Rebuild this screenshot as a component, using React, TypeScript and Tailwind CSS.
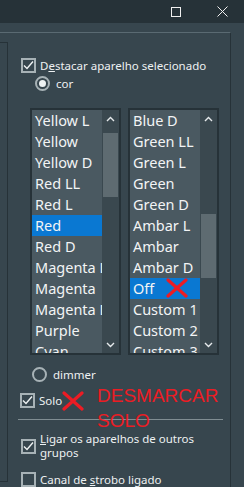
const LEFT = [
  "Yellow L",
  "Yellow",
  "Yellow D",
  "Red LL",
  "Red L",
  "Red",
  "Red D",
  "Magenta L",
  "Magenta",
  "Magenta D",
  "Purple",
  "Cyan",
];

const RIGHT = [
  "Blue D",
  "Green LL",
  "Green L",
  "Green",
  "Green D",
  "Ambar L",
  "Ambar",
  "Ambar D",
  "Off",
  "Custom 1",
  "Custom 2",
  "Custom 3",
];

function Check({ checked }: { checked: boolean }) {
  return (
    <div className="flex h-[15px] w-[15px] shrink-0 items-center justify-center border-2 border-[#a7b2b6]">
      {checked && (
        <svg width="11" height="11" viewBox="0 0 11 11">
          <path d="M1 5.5 L4 8.5 L10 1.5" fill="none" stroke="#eef2f3" strokeWidth="1.4" />
        </svg>
      )}
    </div>
  );
}

function Radio({ on }: { on: boolean }) {
  return (
    <div className="flex h-[15px] w-[15px] shrink-0 items-center justify-center rounded-full border-2 border-[#a7b2b6]">
      {on && <div className="h-[7px] w-[7px] rounded-full bg-[#eef2f3]" />}
    </div>
  );
}

function RedX({ className = "" }: { className?: string }) {
  return (
    <svg className={className} width="22" height="20" viewBox="0 0 22 20">
      <path d="M2 2 L20 18 M20 2 L2 18" stroke="#ec1c24" strokeWidth="3.2" strokeLinecap="round" />
    </svg>
  );
}

function ListBox({
  items,
  selected,
  thumbTop,
}: {
  items: string[];
  selected: string;
  thumbTop: number;
}) {
  return (
    <div className="flex h-[247px] w-[91px] overflow-hidden border-2 border-[#263238] bg-[#4a5961]">
      <div className="w-[70px] overflow-hidden">
        {items.map((it) => (
          <div
            key={it}
            className={`h-[21px] whitespace-nowrap pl-[3px] text-[14.5px] leading-[21px] text-[#f2f4f5] ${
              it === selected ? "bg-[#0a78d2]" : ""
            }`}
          >
            {it}
          </div>
        ))}
      </div>
      <div className="relative w-[17px] bg-[#3a484f]">
        <svg className="absolute left-[4px] top-[6px]" width="9" height="6" viewBox="0 0 9 6">
          <path d="M1 5 L4.5 1.5 L8 5" fill="none" stroke="#e6eaec" strokeWidth="1.4" />
        </svg>
        <div
          className="absolute left-[1px] h-[64px] w-[15px] bg-[#5e6b71]"
          style={{ top: thumbTop }}
        />
        <svg className="absolute bottom-[5px] left-[4px]" width="9" height="6" viewBox="0 0 9 6">
          <path d="M1 1 L4.5 4.5 L8 1" fill="none" stroke="#e6eaec" strokeWidth="1.4" />
        </svg>
      </div>
    </div>
  );
}

export default function App() {
  return (
    <div
      className="relative flex h-[487px] w-[244px] flex-col overflow-hidden bg-[#37464e] text-[#eef1f2]"
      style={{ fontFamily: '"Noto Sans", "Open Sans", sans-serif' }}
    >
      {/* barra de título */}
      <div className="flex h-[23px] shrink-0 items-center bg-[#263238]">
        <div className="ml-[171px] h-[10px] w-[10px] border border-[#f0f0f0]" />
        <svg className="ml-[36px]" width="11" height="11" viewBox="0 0 11 11">
          <path d="M0.5 0.5 L10.5 10.5 M10.5 0.5 L0.5 10.5" stroke="#f0f0f0" strokeWidth="1" />
        </svg>
      </div>

      <div className="mt-[9px] flex h-[460px] w-[231px] border-t border-r border-t-[#5a6a72] border-r-[#263238]">
        <div className="mt-[9px] h-[440px] w-[8px] shrink-0 border-y border-r border-[#263238]" />

        <div className="relative flex flex-1 flex-col">
          <div className="ml-[13px] mt-[25px] flex items-center gap-[4px] text-[11.5px] leading-[15px]">
            <Check checked />
            <span>
              D<u>e</u>stacar aparelho selecionado
            </span>
          </div>

          <div className="ml-[27px] mt-[3px] flex items-center gap-[6px] text-[11.5px] leading-[15px]">
            <Radio on />
            <span>cor</span>
          </div>

          <div className="ml-[22px] mt-[17px] flex gap-[7px]">
            <ListBox items={LEFT} selected="Red" thumbTop={23} />
            <ListBox items={RIGHT} selected="Off" thumbTop={104} />
          </div>

          <div className="ml-[24px] mt-[12px] flex items-center gap-[6px] text-[11.5px] leading-[15px]">
            <Radio on={false} />
            <span>dimmer</span>
          </div>

          <div className="ml-[12px] mt-[11px] flex items-center gap-[4px] text-[11.5px] leading-[15px]">
            <Check checked />
            <span>Solo</span>
          </div>

          <div className="ml-[10px] mt-[11px] h-px w-[205px] bg-[#808d92]" />

          <div className="ml-[13px] mt-[12px] flex items-center gap-[4px] text-[11.5px] leading-[14px]">
            <Check checked />
            <span className="w-[170px]">
              <u>L</u>igar os aparelhos de outros grupos
            </span>
          </div>

          <div className="ml-[13px] mt-[12px] flex items-center gap-[4px] text-[11.5px] leading-[15px]">
            <Check checked={false} />
            <span>
              Canal de <u>s</u>trobo ligado
            </span>
          </div>
        </div>
      </div>

      {/* anotações */}
      <RedX className="absolute left-[166px] top-[278px]" />
      <RedX className="absolute left-[62px] top-[391px]" />
      <div
        className="absolute left-[97px] top-[383px] text-[19px] leading-[25px] text-[#ec1c24]"
        style={{ fontFamily: '"Liberation Sans", Arial, sans-serif' }}
      >
        DESMARCAR
        <br />
        SOLO
      </div>
    </div>
  );
}
